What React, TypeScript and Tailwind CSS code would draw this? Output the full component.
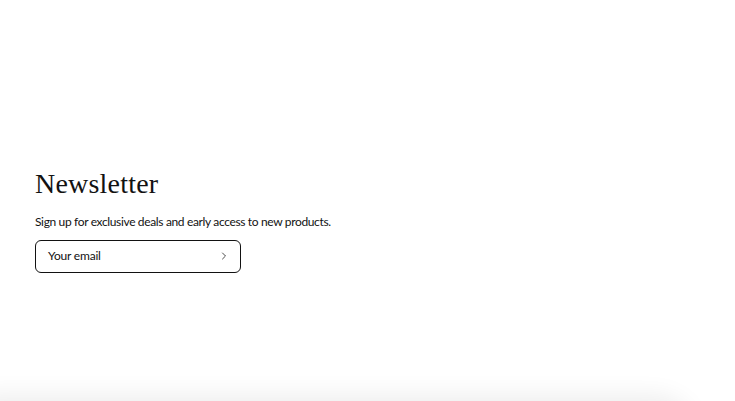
import { ChevronRight } from "lucide-react";

export default function App() {
  return (
    <div className="min-h-screen bg-white overflow-hidden">
      <section className="h-[401px] flex flex-col justify-center px-[35px] pt-[38px]">
        <h2 className="font-['Liberation_Serif',serif] text-[28px] leading-[34px] text-[#121212] tracking-[0.2px]">
          Newsletter
        </h2>
        <p className="mt-[12px] font-['Lato',sans-serif] text-[12px] leading-[18px] text-[#121212] tracking-[-0.35px]">
          Sign up for exclusive deals and early access to new products.
        </p>
        <div className="mt-[9px] w-[206px] h-[33px] border border-[#121212] rounded-[6px] flex items-center justify-between pl-[12px] pr-[10px]">
          <span className="font-['Lato',sans-serif] text-[12px] text-[#121212] tracking-[-0.2px]">Your email</span>
          <ChevronRight className="w-[12px] h-[12px] text-[#121212]" strokeWidth={1.5} />
        </div>
      </section>
      <div className="h-[200px] w-[715px] -ml-[20px] bg-white rounded-tr-[40px] shadow-[0_-6px_24px_rgba(0,0,0,0.07)]"></div>
    </div>
  );
}
